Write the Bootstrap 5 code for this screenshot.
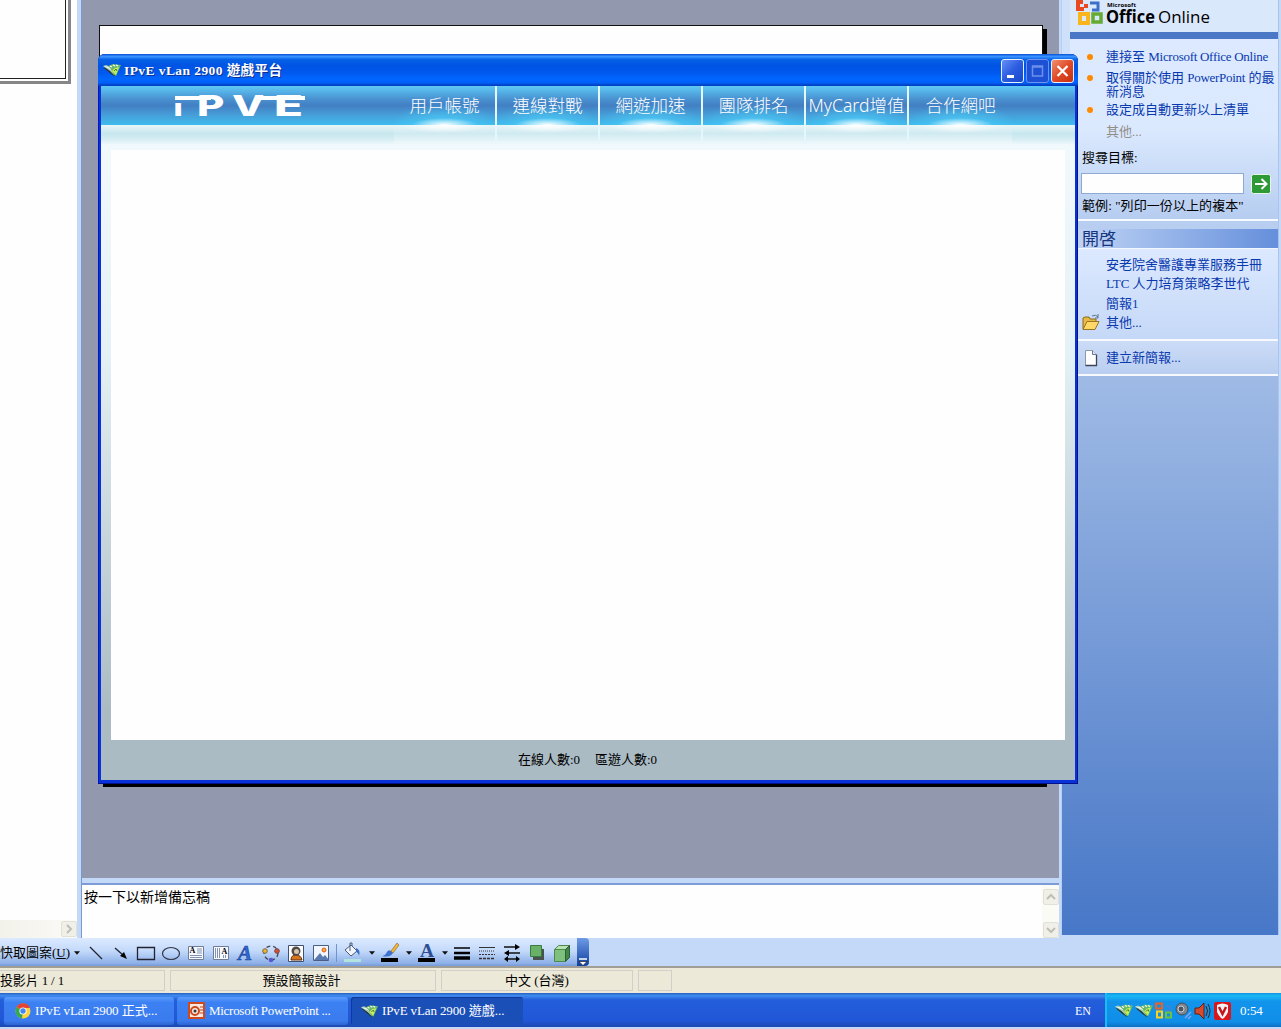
<!DOCTYPE html>
<html lang="zh-Hant">
<head>
  <meta charset="UTF-8">
  <title>IPvE vLan 2900 遊戲平台</title>
  <link href="https://cdn.jsdelivr.net/npm/bootstrap@5.3.3/dist/css/bootstrap.min.css" rel="stylesheet">
  <style>
    body { font-family: "Liberation Serif", "Noto Sans CJK TC", serif; font-size: 13px; line-height: 16px; color: #000; background: #c4d8f8; white-space: nowrap; }
    svg { display: block; flex: none; overflow: visible; }
    .desktop { width: 1281px; height: 1029px; }
    .workarea { height: 938px; }

    /* left outline pane */
    .outline-pane { width: 77px; background: #fefefe; }
    .thumb { width: 71px; height: 84px; border-right: 3px solid #868686; border-bottom: 3px solid #868686; }
    .thumb div { width: 66px; height: 79px; border-right: 1px solid #222; border-bottom: 1px solid #222; }
    .hscroll { height: 18px; background: linear-gradient(90deg, #f2f1ea, #fbfbf8); }
    .scroll-btn { width: 16px; height: 16px; background: #f0efe8; border: 1px solid #e2e1d8; border-radius: 2px; }

    /* slide */
    .center-pane { width: 978px; margin-left: 4px; border-left: 1px solid #7898d0; }
    .slide-area { height: 878px; background: #9299ae; padding: 25px 0 0 17px; }
    .slide { width: 944px; height: 758px; background: #fefefe; border: 1px solid #111; box-shadow: 4px 4px 0 #000; }
    .notes { height: 55px; margin-top: 5px; background: #fefefe; border-top: 2px solid #7d9bd6; font-size: 14px; }
    .notes-scroll { width: 17px; background: #fbfbf6; }

    /* task pane */
    .task-pane { width: 218px; margin-left: 2px; height: 935px; padding-left: 8px; border-left: 1px solid #b8cff5; background: #cfe0fa; border-right: 1px solid #a8c5f0; }
    .office-head { height: 32px; background: #dae8fc; padding: 0 0 0 6px; }
    .head-bar { height: 7px; background: #4a78c7; }
    .sect-a { height: 182px; padding: 8px 0 0 11px; background: linear-gradient(#dce9ff, #dbe9fe 50%, #b6cdf0); border-bottom: 2px solid #f6faff; }
    .sect-gap { height: 8px; background: #b8cef1; }
    .sect-title { height: 20px; padding-left: 12px; font-size: 17px; line-height: 21px; color: #17357f; background: linear-gradient(90deg, #c2d6f5, #658fdc); border-bottom: 1px solid #f2f7ff; }
    .sect-b { height: 92px; padding: 6px 0 0 12px; background: linear-gradient(#dce9ff, #c5d8f7); border-bottom: 2px solid #f6faff; }
    .sect-c { height: 35px; padding: 9px 0 0 12px; background: linear-gradient(#ccdcf7, #b9cef0); border-bottom: 2px solid #f6faff; }
    .sect-fill { margin-left: -8px; background: linear-gradient(#9fbae5, #4777c7); }
    .task-link { color: #0939ae; }
    .task-link .latin { letter-spacing: -.28px; }
    .bullet { width: 6px; height: 6px; border-radius: 50%; background: #ff8a00; margin: 7px 13px 0 6px; flex: none; }
    .row-20 { height: 20px; line-height: 20px; }
    .two-lines { height: 28px; line-height: 14px; margin: 4px 0 1px; }
    .two-lines .bullet { margin-top: 4px; }
    .search-input { width: 163px; height: 21px; background: #fefefe; border: 1px solid #8da9d4; border-radius: 0; }
    .file-row { height: 19.4px; line-height: 19.4px; }
    .file-icon { width: 24px; }

    /* game window */
    .game-window { position: absolute; left: 98px; top: 54px; width: 980px; height: 730px; border-radius: 7px 7px 0 0; background: #0831d9; padding: 0 3px 4px; box-shadow: inset 1px 0 #0019bd, inset -1px -1px #00138c; }
    .title-bar { height: 32px; margin: 0 -3px; padding: 0 4px 0 5px; border-radius: 7px 7px 0 0; background: linear-gradient(#0a50d8, #3a94ff 8%, #0763e8 17%, #0054e3 35%, #0058ee 58%, #0066ff 77%, #0060f8 90%, #0038b8 100%); }
    .title-text { color: #fff; font-weight: 700; font-size: 13.5px; letter-spacing: .42px; padding-top: 2px; text-shadow: 1px 1px #10308f; }
    .win-btn { width: 23px; height: 24px; border: 1px solid #e7efff; border-radius: 3px; background: linear-gradient(135deg, #6390f3, #2c5ce0 50%, #1646c9); }
    .win-btn.dim { border-color: #6f93ee; background: #1e50d6; }
    .win-btn.shut { background: linear-gradient(135deg, #f09070, #df4a27 50%, #c83010); }
    .game-head { height: 39px; background: linear-gradient(#5fc9f7, #4a94d2 32%, #427fc3 50%, #469fd8 75%, #3fbcef); }
    .game-sub { height: 19px; background: linear-gradient(#eaf6f8, #c7e7ee 45%, #d5edf3 75%, #edf7fb); }
    .game-nav { position: absolute; left: 296px; top: 32px; height: 57px; }
    .game-tab { width: 103px; height: 57px; border-right: 2px solid #e5f7fe; background: linear-gradient(#fff0, #ffffff4d) 0 39px / 100% 18px no-repeat; }
    .game-tab:last-child { border-right: 0; }
    .tab-face { height: 39px; padding-top: 9px; text-align: center; color: #fff; font: 300 17.5px/20px "Noto Sans", "Noto Sans CJK TC", sans-serif; background: radial-gradient(ellipse 33px 7px at 50% 100%, #fff, #fff0), radial-gradient(ellipse 54px 22px at 50% 100%, #4cd2fbcc, #3fbcef00); }
    .tab-face span { margin: 0 -4px; }
    .tab-glow { height: 9px; background: radial-gradient(ellipse 46px 8px at 50% 0, #fff, #fff0); }
    .game-body { padding: 6px 10px 0; height: 596px; background: linear-gradient(#f2f9fd, #e4f1f6 35%, #abbbc4 95%); }
    .game-body div { height: 590px; background: #fefefe; }
    .game-foot { height: 40px; background: #abbbc4; padding-top: 12px; padding-left: 417px; font-size: 13px; }

    /* drawing toolbar */
    .draw-bar { height: 30px; background: #c4d8f8; border-bottom: 2px solid #a09d94; }
    .draw-tools { width: 577px; height: 28px; padding-top: 1px; background: linear-gradient(#dceaff, #c4dafa 45%, #8eb1e8 90%, #7599d8); }
    .draw-label { width: 83px; font-size: 13px; }
    .tool { width: 25px; display: flex; justify-content: center; }
    .tool-drop { width: 12px; }
    .draw-end { width: 12px; height: 28px; border-radius: 0 4px 4px 0; background: linear-gradient(#6e9be6, #10409f); }

    .status-bar { height: 25px; background: #ece9d8; }
    .status-cell { height: 21px; border: 1px solid #d0d0c8; text-align: center; line-height: 20px; }

    .task-bar { height: 34px; background: linear-gradient(#2860c0, #3f8cf0 8%, #245edb 20%, #2057d8 80%, #1c48b0); color: #fff; }
    .task-btn { height: 28px; margin-top: 1px; border-radius: 3px; padding-left: 11px; background: linear-gradient(#5a9bfb, #3c81f3 20%, #3a7bee 85%, #2d66cf); }
    .task-btn.pressed { background: #1b4fb8; box-shadow: inset 1px 1px #12389a; }
    .task-btn .latin { letter-spacing: -.13px; }
    .tray { width: 176px; background: linear-gradient(#1290e0, #18b8f5 8%, #1294ec 25%, #0f8ee8 85%, #0d70c4); border-left: 2px solid #16bdf5; padding-left: 8px; padding-top: 1px; }
  </style>
</head>
<body>

<!-- Shared icons -->
<svg width="0" height="0" class="position-absolute">
  <symbol id="ico-ipve" viewBox="0 0 18 14">
    <path d="M1 5l6 5 4 3 2 0-1-5-4-4z" fill="#26382f"/>
    <path d="M0 3l3-1 5 2 4 6-1 2-4-4z" fill="#a8c8b4"/>
    <path d="M0 3l7 1 2 3z" fill="#eaf6f0"/>
    <path d="M5 3l5-2 8 1-5 11-2-1-3-6z" fill="#68b86c"/>
    <path d="M9 8l3-3 4-1-3 8z" fill="#c6ec5a"/>
    <path d="M7 3l2 1M10 2l2 1M13 2l2 1" stroke="#fff" stroke-width="1.200"/>
    <path d="M11 8l2-2 1 2" stroke="#3d7c3c" fill="none"/>
  </symbol>
  <symbol id="ico-office" viewBox="0 0 18 18">
    <g fill="none" stroke-width="2">
      <path d="M8 2H2v5h6V1" stroke="#f0601e"/>
      <path d="M12 5h4v4h-5" stroke="#4b80d8" stroke-width="1.500"/>
      <path d="M8 10H3v6h5z" stroke="#ffd21a"/>
      <path d="M12 11h5v5h-5z" stroke="#6dc33f"/>
    </g>
  </symbol>
  <symbol id="ico-drop" viewBox="0 0 7 4"><path d="M0 0h7L3.500 4z" fill="#111"/></symbol>
</svg>

<div class="desktop position-relative overflow-hidden d-flex flex-column">
  <div class="workarea d-flex">

    <!-- Outline pane -->
    <div class="outline-pane d-flex flex-column justify-content-between">
      <div class="thumb"><div></div></div>
      <div class="hscroll d-flex justify-content-end align-items-center">
        <div class="scroll-btn d-flex align-items-center justify-content-center">
          <svg width="8" height="10"><path d="M2 1l4 4-4 4" fill="none" stroke="#bfbeb6" stroke-width="2"/></svg>
        </div>
      </div>
    </div>

    <!-- Slide and notes -->
    <div class="center-pane">
      <div class="slide-area"><div class="slide"></div></div>
      <div class="notes d-flex justify-content-between">
        <div style="padding: 5px 0 0 2px">按一下以新增備忘稿</div>
        <div class="notes-scroll d-flex flex-column justify-content-between align-items-center pt-1 pb-0">
          <div class="scroll-btn d-flex align-items-center justify-content-center">
            <svg width="10" height="8"><path d="M1 6l4-4 4 4" fill="none" stroke="#bfbeb6" stroke-width="2"/></svg>
          </div>
          <div class="scroll-btn d-flex align-items-center justify-content-center">
            <svg width="10" height="8"><path d="M1 2l4 4 4-4" fill="none" stroke="#bfbeb6" stroke-width="2"/></svg>
          </div>
        </div>
      </div>
    </div>

    <!-- Task pane -->
    <div class="task-pane d-flex flex-column">
      <div class="office-head">
        <svg width="200" height="30">
          <g fill="none" stroke-width="4">
            <path d="M7 2H2v7h6M8 6h4" stroke="#ea4a1f"/>
            <path d="M14 3h8v7h-6" stroke="#3c6fc9" stroke-width="3"/>
            <path d="M12 14H4v9h8z" stroke="#f9b51b"/>
            <path d="M17 14h8v8h-8z" stroke="#66aa34" stroke-width="3.500"/>
          </g>
          <text x="31" y="7" font-family="Open Sans" font-size="6" font-weight="700" textLength="29">Microsoft</text>
          <text x="30" y="23" font-family="Open Sans" font-size="17" font-weight="700" textLength="49" lengthAdjust="spacingAndGlyphs">Office</text>
          <text x="82" y="23" font-family="Open Sans" font-size="17" textLength="52" lengthAdjust="spacingAndGlyphs">Online</text>
        </svg>
      </div>
      <div class="head-bar"></div>
      <div class="sect-a">
        <div class="task-link d-flex row-20"><i class="bullet"></i><span>連接至 <span class="latin">Microsoft Office Online</span></span></div>
        <div class="task-link d-flex two-lines"><i class="bullet"></i><span>取得關於使用 <span class="latin">PowerPoint</span> 的最<br>新消息</span></div>
        <div class="task-link d-flex row-20"><i class="bullet"></i><span>設定成自動更新以上清單</span></div>
        <div class="row-20" style="color: #918f8a; padding: 2px 0 0 25px">其他...</div>
        <div style="padding: 10px 0 7px 1px">搜尋目標:</div>
        <div class="d-flex align-items-center">
          <div class="search-input"></div>
          <svg width="20" height="20" style="margin-left: 7px">
            <rect x=".5" y=".5" width="19" height="19" rx="2" fill="#2d9a35" stroke="#e8f6e8"/>
            <path d="M4 10h11M10.500 5l5 5-5 5" fill="none" stroke="#fff" stroke-width="2"/>
          </svg>
        </div>
        <div style="padding: 4px 0 0 1px; letter-spacing: .08px">範例: "列印一份以上的複本"</div>
      </div>
      <div class="sect-gap"></div>
      <div class="sect-title">開啓</div>
      <div class="sect-b task-link">
        <div class="file-row d-flex"><div class="file-icon"></div>安老院舍醫護專業服務手冊</div>
        <div class="file-row d-flex"><div class="file-icon"></div>LTC 人力培育策略李世代</div>
        <div class="file-row d-flex"><div class="file-icon"></div>簡報1</div>
        <div class="file-row d-flex align-items-center">
          <div class="file-icon">
            <svg width="18" height="17">
              <path d="M1 15V4l2-1h4l1 2h6v3" fill="#e8b944" stroke="#8b6a1a"/>
              <path d="M1 15.500l4-8h12l-4 8z" fill="#ffd868" stroke="#9a7420"/>
              <path d="M10 2q4-2 6 1M16 0v4h-3" fill="none" stroke="#5a7292"/>
            </svg>
          </div>其他...
        </div>
      </div>
      <div class="sect-c task-link">
        <div class="d-flex align-items-center">
          <div class="file-icon ps-1">
            <svg width="12" height="16" style="margin-left: -1px"><path d="M.5.5h7l4 4v11H.5z" fill="#fff" stroke="#8b99b0"/><path d="M11.500 4.500v11H.5" fill="none" stroke="#3c4658" stroke-width="1.300"/><path d="M7.500.5v4h4" fill="#dde5f0" stroke="#6a7a92"/></svg>
          </div>建立新簡報...
        </div>
      </div>
      <div class="sect-fill flex-grow-1"></div>
    </div>
  </div>

  <!-- Drawing toolbar -->
  <div class="draw-bar d-flex">
    <div class="draw-tools d-flex align-items-center">
      <div class="draw-label d-flex align-items-center">快取圖案(<u>U</u>)<svg width="6" height="4" class="ms-1"><use href="#ico-drop"/></svg></div>
      <div class="tool"><svg width="20" height="20"><path d="M4 4l12 12" stroke="#223" stroke-width="1.300"/></svg></div>
      <div class="tool"><svg width="20" height="20"><path d="M4 5l8 7" stroke="#223" stroke-width="1.300"/><path d="M16 16l-3-7-4 4z"/></svg></div>
      <div class="tool"><svg width="20" height="20"><path d="M1.500 4.500h17v12h-17z" fill="none" stroke="#223" stroke-width="1.300"/></svg></div>
      <div class="tool"><svg width="20" height="20"><ellipse cx="10" cy="10.500" rx="8.500" ry="6" fill="none" stroke="#334" stroke-width="1.200"/></svg></div>
      <div class="tool"><svg width="20" height="20"><path d="M2.500 3.500h15v13h-15z" fill="#f6f9ff" stroke="#6f7d98"/><text x="3.500" y="10" font-size="8" font-weight="700">A</text><path d="M11 6h5M11 8h5M11 10h5M4 12.500h12M4 14.500h12" stroke="#8794ad"/></svg></div>
      <div class="tool"><svg width="20" height="20"><path d="M2.500 3.500h15v13h-15z" fill="#f6f9ff" stroke="#6f7d98"/><text x="10.500" y="11" font-size="8" font-weight="700">A</text><path d="M4.500 5v10M6.500 5v10M8.500 5v10M12.500 12v3M14.500 12v3" stroke="#8794ad"/></svg></div>
      <div class="tool"><svg width="20" height="20"><text x="2" y="17" font-size="21" font-weight="700" font-style="italic" fill="#2f6bd0" stroke="#1b439b" stroke-width=".6">A</text></svg></div>
      <div class="tool"><svg width="20" height="20"><circle cx="10" cy="10" r="7" fill="none" stroke="#445" stroke-dasharray="4 3" stroke-width="1.300"/><circle cx="4" cy="8" r="2.300" fill="#efb81e" stroke="#765"/><circle cx="16" cy="8" r="2.300" fill="#d9502c" stroke="#744"/><circle cx="10" cy="17" r="2.300" fill="#5b57d1"/></svg></div>
      <div class="tool"><svg width="20" height="20"><path d="M2.500 2.500h15v16h-15z" fill="#fff" stroke="#40506e"/><path d="M5 17q0-5 5-5t6 5z" fill="#d9731e" stroke="#5b3515"/><circle cx="10" cy="8" r="4.500" fill="#4c4a4c"/><circle cx="10.500" cy="8.500" r="2.500" fill="#dbc3a5"/></svg></div>
      <div class="tool"><svg width="20" height="20"><path d="M2.500 2.500h15v15h-15z" fill="#f2f7ff" stroke="#4b5f85"/><path d="M3 17l6-7 3 4 2-2 4 5z" fill="#5a7bb0"/><circle cx="13" cy="7" r="2" fill="#ffb13a" stroke="#df5c22"/></svg></div>
      <div style="width: 7px"><svg width="3" height="18" style="margin-left: 2px"><path d="M1.500 0v18" stroke="#7094d0"/></svg></div>
      <div class="tool"><svg width="20" height="22"><path d="M2 8l6-5 6 6-6 5z" fill="#f1f6fc" stroke="#4a5a78"/><path d="M7 9V1h2v3" fill="none" stroke="#4a5a78"/><path d="M13 6q5 2 3 8-1-4-3-4" fill="#3a6cc0"/><path d="M1 17h17v3H1z" fill="#b3e3de"/></svg></div>
      <div class="tool-drop"><svg width="6" height="4" class="ms-1"><use href="#ico-drop"/></svg></div>
      <div class="tool"><svg width="20" height="22"><path d="M11 9l6-8 2 2-6 8z" fill="#f5b534" stroke="#7d6332" stroke-width=".6"/><path d="M2 14q3 0 5-4t6 1q-3 5-11 3z" fill="#3f71cf"/><path d="M1 16h17v4H1z"/></svg></div>
      <div class="tool-drop"><svg width="6" height="4" class="ms-1"><use href="#ico-drop"/></svg></div>
      <div class="tool"><svg width="20" height="22"><text x="3" y="15" font-size="18" font-weight="700" fill="#2d4e95" textLength="14" lengthAdjust="spacingAndGlyphs">A</text><path d="M1 16h17v4H1z"/></svg></div>
      <div style="width: 10px"><svg width="6" height="4" style="margin-left: 3px"><use href="#ico-drop"/></svg></div>
      <div class="tool"><svg width="18" height="16"><path d="M1 3h16" stroke="#000" stroke-width="1.500"/><path d="M1 8h16" stroke="#000" stroke-width="2.500"/><path d="M1 13h16" stroke="#000" stroke-width="3.500"/></svg></div>
      <div class="tool"><svg width="18" height="16"><path d="M1 2.500h16" stroke="#333"/><path d="M1 6h16" stroke="#333" stroke-dasharray="1 1"/><path d="M1 9.500h16" stroke="#333" stroke-dasharray="2 1"/><path d="M1 13.500h16" stroke="#333" stroke-width="1.500" stroke-dasharray="3 1"/></svg></div>
      <div class="tool"><svg width="18" height="20"><path d="M1 4h12M5 10h12M4 16h10" stroke="#111" stroke-width="1.500"/><path d="M12 1l5 3-5 3zM6 7l-5 3 5 3zM5 13l-4 3 4 3zM13 13l4 3-4 3z"/></svg></div>
      <div class="tool"><svg width="20" height="20"><path d="M6 6h11v11H6z" fill="#48524e"/><path d="M3.500 2.500h11v11h-11z" fill="#69b069" stroke="#397c42"/></svg></div>
      <div class="tool"><svg width="20" height="20"><path d="M2.500 6.500h11v12h-11z" fill="#7fc07c" stroke="#4c8a50"/><path d="M2.500 6.500l4-4h11l-4 4z" fill="#b9e0b2" stroke="#4c8a50"/><path d="M13.500 6.500l4-4v12l-4 4z" fill="#42854b" stroke="#2c5e35"/></svg></div>
    </div>
    <div class="draw-end d-flex align-items-end justify-content-center">
      <svg width="8" height="8"><path d="M0 1h8" stroke="#fff" stroke-width="1.500"/><path d="M0 3.500h8l-4 4z" fill="#fff" stroke="#111" stroke-width=".6"/></svg>
    </div>
  </div>

  <!-- Status bar -->
  <div class="status-bar d-flex align-items-center">
    <div class="status-cell text-start border-start-0" style="width: 165px; letter-spacing: -.15px">投影片 1 / 1</div>
    <div class="status-cell" style="width: 266px; margin-left: 5px; padding-right: 3px">預設簡報設計</div>
    <div class="status-cell" style="width: 192px; margin-left: 5px">中文 (台灣)</div>
    <div class="status-cell" style="width: 34px; margin-left: 5px"></div>
  </div>

  <!-- Windows taskbar -->
  <div class="task-bar d-flex">
    <div class="d-flex align-items-center flex-grow-1" style="padding-left: 4px; gap: 3px">
      <div class="task-btn d-flex align-items-center" style="width: 170px">
        <svg width="16" height="16" class="me-1">
          <circle cx="8" cy="8" r="7.500" fill="#ffd43b"/>
          <path d="M8 8L1.500 4A7.500 7.500 0 0 1 15 5H8z" fill="#e54335"/>
          <path d="M8 8l-1 7.400A7.500 7.500 0 0 1 1.500 4z" fill="#36a853"/>
          <circle cx="8" cy="8" r="3.600" fill="#fff"/><circle cx="8" cy="8" r="2.700" fill="#4285f4"/>
        </svg>
        <span class="latin">IPvE vLan 2900 </span>&nbsp;正式...
      </div>
      <div class="task-btn d-flex align-items-center" style="width: 171px">
        <svg width="17" height="17" class="me-1">
          <path d="M1 1h15v15H1z" fill="#f7e9e0" stroke="#cc4a1d" stroke-width="2"/>
          <circle cx="7" cy="9" r="4" fill="none" stroke="#cc4a1d" stroke-width="2"/><circle cx="7" cy="9" r="1.500" fill="#333"/>
          <path d="M12 5h3M12 8h3M12 11h3" stroke="#b8441e"/>
        </svg>
        <span style="letter-spacing: -.28px">Microsoft PowerPoint ...</span>
      </div>
      <div class="task-btn pressed d-flex align-items-center" style="width: 172px; padding-left: 10px">
        <svg width="17" height="14" class="me-1"><use href="#ico-ipve"/></svg>
        <span class="latin">IPvE vLan 2900 </span>&nbsp;遊戲...
      </div>
      <div class="ms-auto" style="padding: 1px 14px 0 0; font-size: 12px">EN</div>
    </div>
    <div class="tray d-flex align-items-center">
      <svg width="18" height="15"><use href="#ico-ipve"/></svg>
      <svg width="18" height="15" style="margin-left: 2px"><use href="#ico-ipve"/></svg>
      <svg width="18" height="19" style="margin-left: 1px"><use href="#ico-office"/></svg>
      <svg width="17" height="18" style="margin-left: 3px"><circle cx="7" cy="7" r="6" fill="#7e868f" stroke="#444c58"/><circle cx="6" cy="7" r="3" fill="#4c5560" stroke="#c9d0d6"/><path d="M10 16l6-6M13 17l3-3" stroke="#86a0f0" stroke-width="1.500"/></svg>
      <svg width="17" height="18" style="margin-left: 2px"><path d="M1 6h4l5-5v16l-5-5H1z" fill="#d94a2c" stroke="#5b2114"/><path d="M12 4q3 5 0 10M14 2q4 7 0 14" fill="none" stroke="#3b2420"/></svg>
      <svg width="17" height="18" style="margin-left: 3px"><rect width="17" height="18" rx="2" fill="#d8161c"/><path d="M3 3q5.500-3 11 0v7q-2 5-5.500 7-3.500-2-5.500-7z" fill="#f2f2f2"/><path d="M5 5l3.500 7L12 5" fill="none" stroke="#c4161c" stroke-width="2.500"/></svg>
      <span style="margin-left: 9px; letter-spacing: -.1px">0:54</span>
    </div>
  </div>

  <!-- Game window -->
  <div class="game-window">
    <div class="title-bar d-flex align-items-center">
      <svg width="18" height="14" style="margin-right: 3px"><use href="#ico-ipve"/></svg>
      <span class="title-text">IPvE vLan 2900 遊戲平台</span>
      <div class="d-flex ms-auto" style="gap: 2px; padding-top: 2px">
        <div class="win-btn"><svg width="21" height="22"><path d="M5 15h7v3H5z" fill="#fff"/></svg></div>
        <div class="win-btn dim"><svg width="21" height="22"><path d="M5.500 6h10v10h-10zM5 7h11" fill="none" stroke="#6c90ea" stroke-width="1.500"/></svg></div>
        <div class="win-btn shut"><svg width="21" height="22"><path d="M5.500 6l10 10M15.500 6l-10 10" stroke="#fff" stroke-width="2.200"/></svg></div>
      </div>
    </div>
    <div class="game-head">
      <svg width="220" height="39">
        <g fill="#fff">
          <path d="M74 10h36v4H74zM158 10h46v4h-46z"/>
          <g font-family="Inter, sans-serif" font-weight="800">
            <text transform="translate(72.500 30) scale(1.900 1)" font-size="17">I</text>
            <text transform="translate(96 30) scale(1.500 1)" font-size="28">P</text>
            <text transform="translate(131 30) scale(1.500 1)" font-size="28">V</text>
            <text transform="translate(173 30) scale(1.700 1)" font-size="28">E</text>
          </g>
        </g>
      </svg>
    </div>
    <div class="game-sub"></div>
    <div class="game-nav d-flex">
      <div class="game-tab"><div class="tab-face">用戶帳號</div><div class="tab-glow"></div></div>
      <div class="game-tab"><div class="tab-face">連線對戰</div><div class="tab-glow"></div></div>
      <div class="game-tab"><div class="tab-face">網遊加速</div><div class="tab-glow"></div></div>
      <div class="game-tab"><div class="tab-face">團隊排名</div><div class="tab-glow"></div></div>
      <div class="game-tab"><div class="tab-face"><span>MyCard增值</span></div><div class="tab-glow"></div></div>
      <div class="game-tab"><div class="tab-face">合作網吧</div><div class="tab-glow"></div></div>
    </div>
    <div class="game-body"><div></div></div>
    <div class="game-foot d-flex"><span style="width: 77px">在線人數:0</span><span>區遊人數:0</span></div>
  </div>
</div>

<script src="https://cdn.jsdelivr.net/npm/bootstrap@5.3.3/dist/js/bootstrap.bundle.min.js"></script>
</body>
</html>
